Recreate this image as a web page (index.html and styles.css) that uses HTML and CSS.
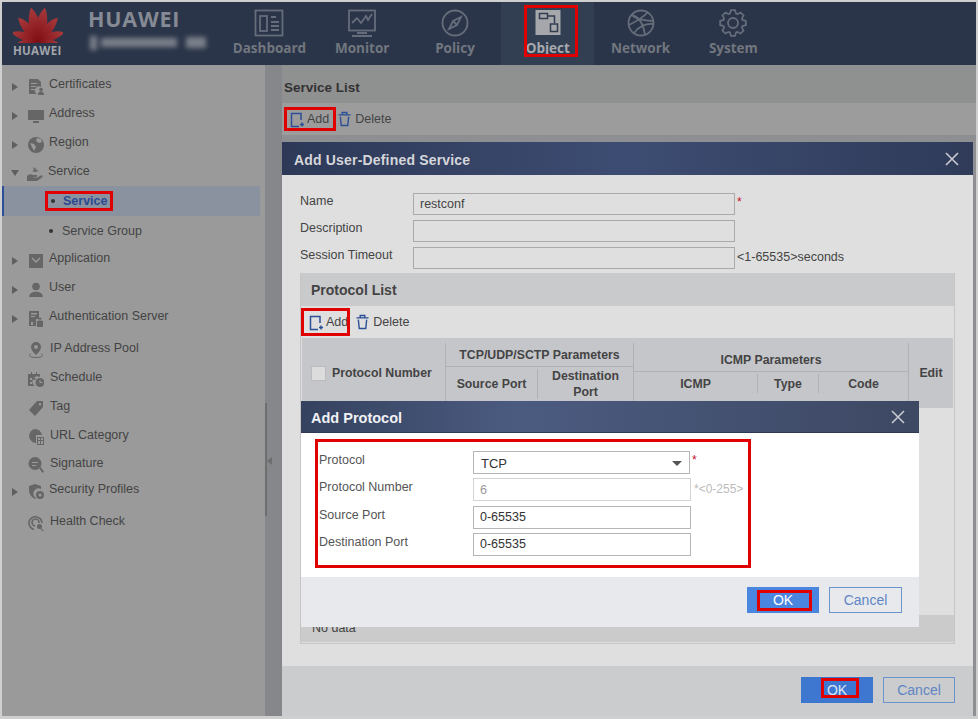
FILE: index.html
```html
<!DOCTYPE html>
<html lang="en">
<head>
<meta charset="utf-8">
<title>Service List</title>
<link rel="stylesheet" href="styles.css">
</head>
<body>
<div class="app">
  <header class="topbar">
    <div class="brand">
      <svg class="logo" viewBox="0 0 50 37" width="50" height="37">
        <defs>
          <linearGradient id="petal" x1="0" y1="0" x2="0" y2="1">
            <stop offset="0" stop-color="#a83a3c"/>
            <stop offset="1" stop-color="#7e0c12"/>
          </linearGradient>
        </defs>
        <g transform="translate(25 36)" fill="url(#petal)">
          <path transform="rotate(-10)" d="M0 0C-8-11-7-25-1-35 6-27 7-11 0 0Z"/>
          <path transform="rotate(10)" d="M0 0C-7-11-6-27 1-35 7-25 8-11 0 0Z"/>
          <path transform="rotate(-32)" d="M0 0C-7-9-8-22-4-31 3-25 5-10 0 0Z"/>
          <path transform="rotate(32)" d="M0 0C-5-10-3-25 4-31 8-22 7-9 0 0Z"/>
          <path transform="rotate(-56)" d="M0 0C-6-7-9-17-7-27 1-23 4-9 0 0Z"/>
          <path transform="rotate(56)" d="M0 0C-4-9-1-23 7-27 9-17 6-7 0 0Z"/>
          <path transform="rotate(-80)" d="M0 0C-5-5-7-13-6-21 0-18 3-7 0 0Z"/>
          <path transform="rotate(80)" d="M0 0C-3-7 0-18 6-21 7-13 5-5 0 0Z"/>
        </g>
      </svg>
      <span class="logo-word">HUAWEI</span>
    </div>
    <div class="product">
      <div class="product-name">HUAWEI</div>
      <div class="blurred"><span class="b1"></span><span class="b2"></span><span class="b3"></span></div>
    </div>
    <nav class="nav">
      <a class="nav-item">
        <svg class="nav-icon" viewBox="0 0 30 30"><rect x="1.5" y="2.5" width="27" height="25"/><rect x="6" y="8" width="7" height="15"/><path d="M17 9h5M17 14h8M17 18h8M17 22h8"/></svg>
        <span>Dashboard</span>
      </a>
      <a class="nav-item">
        <svg class="nav-icon" viewBox="0 0 30 30"><rect x="2" y="2.5" width="26" height="20"/><path d="M5 15l5-5 4 5 5-7 2 4 4-6M10 25h10M5 28h20"/></svg>
        <span>Monitor</span>
      </a>
      <a class="nav-item">
        <svg class="nav-icon" viewBox="0 0 30 30"><circle cx="15" cy="15" r="12.5"/><path d="M21 9l-8 4-4 8 8-4zM13 13l4 4"/></svg>
        <span>Policy</span>
      </a>
      <a class="nav-item nav-active">
        <svg class="nav-icon nav-icon-object" viewBox="0 0 30 30"><rect class="tile" x="2.500" y="2" width="25" height="25"/><rect x="6.500" y="5.500" width="8" height="5"/><path d="M14.500 8h7v7"/><rect x="17.500" y="16" width="7" height="7.500"/></svg>
        <span>Object</span>
      </a>
      <a class="nav-item">
        <svg class="nav-icon" viewBox="0 0 30 30"><circle cx="15" cy="15" r="12.5"/><path d="M5 7c6 1 12 6 14 20M3 17c6-3 14-7 19-13M8 25c4-6 12-10 19-9M6 7c4 4 8 5 21 6"/></svg>
        <span>Network</span>
      </a>
      <a class="nav-item">
        <svg class="nav-icon" viewBox="0 0 30 30"><g transform="translate(15 15)"><polygon points="9.51,-3.09 12.84,-2.03 12.84,2.03 9.51,3.09 8.91,4.54 10.52,7.64 7.64,10.52 4.54,8.91 3.09,9.51 2.03,12.84 -2.03,12.84 -3.09,9.51 -4.54,8.91 -7.64,10.52 -10.52,7.64 -8.91,4.54 -9.51,3.09 -12.84,2.03 -12.84,-2.03 -9.51,-3.09 -8.91,-4.54 -10.52,-7.64 -7.64,-10.52 -4.54,-8.91 -3.09,-9.51 -2.03,-12.84 2.03,-12.84 3.09,-9.51 4.54,-8.91 7.64,-10.52 10.52,-7.64 8.91,-4.54"/><circle r="5"/></g></svg>
        <span>System</span>
      </a>
    </nav>
  </header>

  <div class="workspace">
    <aside class="sidebar">
      <div class="tree-row"><i class="arrow"></i><svg class="tree-icon" viewBox="0 0 16 16"><path d="M1 0h9l3 3v5a4 4 0 0 0-4 7H1zM3 4v1h6V4zM3 7v1h5V7zM3 10v1h4v-1z"/><circle cx="13" cy="10.5" r="1.8"/><path d="M10 16c0-5 6-5 6 0z"/></svg><span>Certificates</span></div>
      <div class="tree-row"><i class="arrow"></i><svg class="tree-icon" viewBox="0 0 16 16"><path d="M0 2h16v10H0zM5 13h6v2H5z"/></svg><span>Address</span></div>
      <div class="tree-row"><i class="arrow"></i><svg class="tree-icon" viewBox="0 0 16 16"><circle cx="8" cy="8" r="8"/><path class="cut" d="M9 1l4 1 1 3-3 1-3-2zM2 6l4 1 2 3-2 4-2-4z"/></svg><span>Region</span></div>
      <div class="tree-row"><i class="arrow arrow-open"></i><svg class="tree-icon" viewBox="0 0 16 16"><path d="M0 10c2-2 4-2 6-1h3c2 0 1 2 0 2H6v.5h4l4-2c2-1 2 1 1 2l-5 3.500H3L0 15z"/><path d="M6 1l1 3-2 1 3 1 4-1-3-1 1-2-1 1z"/></svg><span>Service</span></div>
      <div class="tree-row sub selected"><i class="dot"></i><span>Service</span></div>
      <div class="tree-row sub h28"><i class="dot"></i><span>Service Group</span></div>
      <div class="tree-row"><i class="arrow"></i><svg class="tree-icon" viewBox="0 0 16 16"><path d="M1 1h14v14H1z"/><path class="cut-line" d="M4 5l4 4 4-4"/></svg><span>Application</span></div>
      <div class="tree-row"><i class="arrow"></i><svg class="tree-icon" viewBox="0 0 16 16"><circle cx="8" cy="4.500" r="3.800"/><path d="M1 15c0-7 14-7 14 0z"/></svg><span>User</span></div>
      <div class="tree-row"><i class="arrow"></i><svg class="tree-icon" viewBox="0 0 16 16"><path d="M1 0h10v8H8v7H1zM3 2v1.500h6V2zM3 5v1h4V5zM3 11v3h2v-3z"/><path d="M9 10h6v6H9zM10.500 10V8a1.500 1.500 0 0 1 3 0v2h-1V8h-1v2z"/></svg><span>Authentication Server</span></div>
      <div class="tree-row plain gap3"><i class="arrow-space"></i><svg class="tree-icon" viewBox="0 0 16 16"><path fill-rule="evenodd" d="M8 0a5 5 0 0 1 5 5c0 3-3 6-5 8-2-2-5-5-5-8a5 5 0 0 1 5-5zm0 3a2 2 0 1 0 0 4 2 2 0 0 0 0-4z"/><path class="cut-thin" d="M3 12c-3 1-2 3.500 5 3.500s8-2.500 5-3.500"/></svg><span>IP Address Pool</span></div>
      <div class="tree-row plain"><i class="arrow-space"></i><svg class="tree-icon" viewBox="0 0 16 16"><path d="M0 3h3V1h1v2h4V1h1v2h3v3a5 5 0 0 0-5 9H0zM2 7v2h2V7zM5.500 7v2h2V7zM2 11v2h2v-2z"/><path fill-rule="evenodd" d="M12 7a4.500 4.500 0 1 1 0 9 4.500 4.500 0 0 1 0-9zm-.5 2v3h3v-1h-2V9z"/></svg><span>Schedule</span></div>
      <div class="tree-row plain"><i class="arrow-space"></i><svg class="tree-icon" viewBox="0 0 16 16"><path fill-rule="evenodd" d="M9 1h6v6l-8 9-6-6zm3 2a1.200 1.200 0 1 0 0 2.400A1.200 1.200 0 0 0 12 3z"/></svg><span>Tag</span></div>
      <div class="tree-row plain"><i class="arrow-space"></i><svg class="tree-icon" viewBox="0 0 16 16"><path d="M7 0a7 7 0 0 1 7 6H8v7.900A7 7 0 0 1 7 0z"/><path d="M9 8h7v8H9zM10 9v2h2V9zM13 9v2h2V9zM10 12v3h2v-3zM13 12v3h2v-3z" fill-rule="evenodd"/></svg><span>URL Category</span></div>
      <div class="tree-row plain h27"><i class="arrow-space"></i><svg class="tree-icon" viewBox="0 0 16 16"><path fill-rule="evenodd" d="M7 0a6.500 6.500 0 1 1 0 13A6.500 6.500 0 0 1 7 0zM4 5v1h6V5zM4 8v1h4V8z"/><path d="M11 11l1.500-1 3.500 4.500-1.500 1.500z"/></svg><span>Signature</span></div>
      <div class="tree-row h25"><i class="arrow"></i><svg class="tree-icon" viewBox="0 0 16 16"><path d="M7 0l6 2v3a5 5 0 0 0-5 9l-1 1C3 13 1 10 1 6V2z"/><path fill-rule="evenodd" d="M12 7a4 4 0 1 1 0 8 4 4 0 0 1 0-8zm0 2.500a1.500 1.500 0 1 0 0 3 1.500 1.500 0 0 0 0-3z"/></svg><span>Security Profiles</span></div>
      <div class="tree-row plain gap5"><i class="arrow-space"></i><svg class="tree-icon" viewBox="0 0 16 16"><path class="cut-ring" d="M6 14.500A6.500 6.500 0 1 1 14 8M7 11a3.500 3.500 0 1 1 4-3"/><circle cx="11.500" cy="11.500" r="2.500"/><path d="M13 13l3 3-1 .5-3-3z"/></svg><span>Health Check</span></div>
    </aside>
    <div class="splitter"><i class="split-bar"></i><i class="split-arrow"></i></div>
    <main class="content">
      <h1 class="page-title">Service List</h1>
      <div class="toolbar">
        <a class="tool tool-add"><svg class="ico" viewBox="0 0 15 16"><path d="M11 8V1.500H1.500v13H9M10 12.500h4M12 10.500v4"/></svg>Add</a>
        <a class="tool"><svg class="ico ico-del" viewBox="0 0 14 16"><path d="M.5 3.500h13M4.500 3.500V1h5v2.500M2.500 5.500l1 9.500h7l1-9.500"/></svg>Delete</a>
      </div>
    </main>
  </div>
</div>

<section class="dialog">
  <div class="dialog-title"><span>Add User-Defined Service</span><svg class="close" viewBox="0 0 14 14"><path d="M1 1l12 12M13 1L1 13"/></svg></div>
  <div class="dialog-body">
    <div class="field"><label>Name</label><input class="input" type="text" value="restconf"><em class="req">*</em></div>
    <div class="field"><label>Description</label><input class="input" type="text"></div>
    <div class="field"><label>Session Timeout</label><input class="input" type="text"><span class="hint">&lt;1-65535&gt;seconds</span></div>
    <div class="panel">
      <h2 class="panel-title">Protocol List</h2>
      <div class="panel-tools">
        <a class="tool tool-add"><svg class="ico" viewBox="0 0 15 16"><path d="M11 8V1.500H1.500v13H9M10 12.500h4M12 10.500v4"/></svg>Add</a>
        <a class="tool"><svg class="ico ico-del" viewBox="0 0 14 16"><path d="M.5 3.500h13M4.500 3.500V1h5v2.500M2.500 5.500l1 9.500h7l1-9.500"/></svg>Delete</a>
      </div>
      <div class="thead">
        <div class="th th-proto"><i class="check"></i>Protocol Number</div>
        <div class="th-group th-tcp">
          <div class="group-title">TCP/UDP/SCTP Parameters</div>
          <div class="group-cols"><div class="th th-src">Source Port</div><div class="th th-dst">Destination Port</div></div>
        </div>
        <div class="th-group th-icmp">
          <div class="group-title">ICMP Parameters</div>
          <div class="group-cols"><div class="th th-i">ICMP</div><div class="th th-t">Type</div><div class="th th-c">Code</div></div>
        </div>
        <div class="th th-edit">Edit</div>
      </div>
      <div class="tbody"></div>
      <div class="tfoot">No data</div>
    </div>
  </div>
  <div class="dialog-foot">
    <button class="btn btn-ok">OK</button>
    <button class="btn btn-cancel">Cancel</button>
  </div>
</section>

<section class="modal">
  <div class="modal-title"><span>Add Protocol</span><svg class="close" viewBox="0 0 14 14"><path d="M1 1l12 12M13 1L1 13"/></svg></div>
  <div class="modal-body">
    <div class="mfield"><label>Protocol</label><div class="select">TCP<i class="caret"></i></div><em class="req">*</em></div>
    <div class="mfield"><label>Protocol Number</label><input class="minput minput-off" type="text" value="6" disabled><span class="off-hint">*&lt;0-255&gt;</span></div>
    <div class="mfield"><label>Source Port</label><input class="minput" type="text" value="0-65535"></div>
    <div class="mfield"><label>Destination Port</label><input class="minput" type="text" value="0-65535"></div>
  </div>
  <div class="modal-foot">
    <button class="btn btn-ok btn-bright">OK</button>
    <button class="btn btn-cancel">Cancel</button>
  </div>
</section>

<i class="mark mark-object"></i>
<i class="mark mark-service"></i>
<i class="mark mark-add"></i>
<i class="mark mark-add2"></i>
<i class="mark mark-form"></i>
<i class="mark mark-ok1"></i>
<i class="mark mark-ok2"></i>
</body>
</html>
```

FILE: styles.css
```css
* { box-sizing: border-box; }
html, body { margin: 0; height: 100%; overflow: hidden; }
body {
  background: #cfcfcf;
  padding: 2px 2px 3px;
  font-family: "Liberation Sans", Arial, sans-serif;
  font-size: 12.5px;
  color: #444;
}
.app { height: 714px; display: flex; flex-direction: column; }

/* top bar */
.topbar { height: 63px; background: #2b3549; display: flex; flex: none; color: #71767f; }
.brand { width: 85px; padding: 4px 0 0 11px; display: flex; flex-direction: column; }
.logo { display: block; }
.logo-word { font-size: 11.5px; font-weight: 700; color: #a2a5ac; margin-top: 1px; letter-spacing: .3px; font-family: "Open Sans", sans-serif; line-height: 14px; }
.product { width: 136px; padding-top: 4px; }
.product-name { font-family: "Open Sans", sans-serif; font-weight: 700; font-size: 21.5px; line-height: 26px; color: #858a94; padding-left: 1px; letter-spacing: .8px; }
.blurred { height: 15px; margin-top: 3px; display: flex; align-items: center; filter: blur(2.5px); }
.blurred span { display: block; background: #7b808a; }
.b1 { width: 7px; height: 14px; margin: 0 4px 0 3px; }
.b2 { width: 76px; height: 9px; margin-right: 9px; }
.b3 { width: 20px; height: 11px; }
.nav { display: flex; }
.nav-item {
  width: 92.800px; display: flex; flex-direction: column; align-items: center;
  font-family: "Open Sans", sans-serif; font-weight: 700; font-size: 13.5px; line-height: 20px; padding-top: 6px;
}
.nav-icon { width: 30px; height: 30px; fill: none; stroke: #656c7a; stroke-width: 1.800; }
.nav-active { background: #323e52; color: #a7a9ae; }
.nav-icon-object { stroke: #333d50; stroke-width: 1.500; }
.nav-icon-object .tile { fill: #a5a7ab; stroke: none; }

/* workspace */
.workspace { flex: 1; display: flex; min-height: 0; }
.sidebar { width: 263px; flex: none; background: #9a9a9a; padding-top: 5px; }
.tree-row { height: 29px; display: flex; align-items: center; padding: 0 0 1px 9px; line-height: 16px; }
.arrow { width: 0; height: 0; border-left: 6px solid #5f5f5f; border-top: 4.500px solid transparent; border-bottom: 4.500px solid transparent; margin: 5px 10px 0 1px; flex: none; }
.arrow-open { border-top: 6px solid #5f5f5f; border-left: 4.500px solid transparent; border-right: 4.500px solid transparent; border-bottom: 0; margin: 4px 8px 0 0; }
.arrow-space { width: 17px; flex: none; }
.tree-icon { width: 16px; height: 16px; fill: #666; margin: 5px 5px 0 0; flex: none; }
.plain .tree-icon { margin: 3px 6px 0 0; }
.cut { fill: #9a9a9a; }
.cut-line { fill: none; stroke: #9a9a9a; stroke-width: 1.500; }
.cut-thin { fill: none; stroke: #666; stroke-width: 1; }
.cut-ring { fill: none; stroke: #666; stroke-width: 1.600; }
.sub { padding: 1px 0 0 47px; }
.selected { width: 258px; height: 30px; padding: 0 0 0 47px; background: #8a929f; border-left: 2px solid #2c4f95; color: #2a4a94; font-weight: 700; }
.dot { width: 4px; height: 4px; border-radius: 50%; background: #333; margin-right: 9px; flex: none; }
.selected .dot { margin-right: 8px; }
.h28 { height: 28px; }
.h27 { height: 27px; }
.h25 { height: 25px; }
.gap3 { margin-top: 3px; }
.gap5 { margin-top: 5px; }

.splitter { width: 17px; flex: none; background: #86878a; position: relative; }
.split-bar { position: absolute; left: 0; top: 338px; width: 2px; height: 113px; background: #6d6e70; }
.split-arrow { position: absolute; left: 2px; top: 392px; width: 0; height: 0; border-right: 5px solid #6d6e70; border-top: 4px solid transparent; border-bottom: 4px solid transparent; }
.content { flex: 1; background: #8e8f92; }
.page-title { margin: 0; height: 38px; background: #8f9090; font-size: 13.5px; line-height: 45px; padding-left: 2px; color: #333; }
.toolbar { height: 32px; background: #9c9c9c; display: flex; align-items: center; padding-left: 8px; gap: 9px; }
.tool { display: flex; align-items: center; color: #444; line-height: 16px; }
.ico { width: 15px; height: 16px; fill: none; stroke: #2c4f95; stroke-width: 1.500; margin-right: 2px; }
.ico-del { width: 13px; margin-right: 4px; }
.tool-add .ico { margin-top: 2px; }

/* dialog */
.dialog { position: absolute; left: 282px; top: 142px; width: 691px; height: 574px; background: #dfdfdf; display: flex; flex-direction: column; }
.dialog-title { height: 33px; flex: none; display: flex; align-items: center; justify-content: space-between; padding: 2px 14px 0 12px; background: linear-gradient(90deg, #2d3957, #3d4c72 50%, #2f3b59); color: #d5d6da; font-weight: 700; font-size: 14px; letter-spacing: .18px; }
.close { width: 14px; height: 14px; fill: none; stroke: #c8cad1; stroke-width: 1.600; margin-top: -2px; }
.dialog-body { flex: 1; padding: 18px 18px 0; min-height: 0; }
.field { height: 22px; display: flex; margin-bottom: 5px; }
.field label { width: 113px; flex: none; line-height: 16px; }
.input { width: 322px; height: 22px; border: 1px solid #aaa; background: #dfdfdf; padding: 0 6px; font: inherit; color: #444; outline: 0; }
.req { color: #c8102e; font-style: normal; margin-left: 2px; line-height: 18px; font-size: 12px; }
.hint { margin-left: 2px; line-height: 21px; color: #444; }
.panel { width: 655px; height: 371px; margin-top: -1px; background: #dfdfdf; border: 1px solid #c5c5c5; border-top: 0; display: flex; flex-direction: column; }
.panel-title { margin: 0; height: 33px; background: #c9cacb; font-size: 14px; line-height: 35px; padding-left: 10px; color: #444; flex: none; }
.panel-tools { height: 32px; display: flex; align-items: center; padding-left: 8px; gap: 8px; flex: none; }
.thead { height: 70px; margin: 0 1px; background: #c5c6ca; display: flex; flex: none; font-weight: 700; color: #444; font-size: 12.3px; text-align: center; line-height: 16px; }
.th { display: flex; align-items: center; justify-content: center; }
.th-proto { width: 144px; justify-content: flex-start; padding: 0 0 5px 9px; border-right: 1px solid #b0b1b5; margin-top: 5px; }
.check { width: 15px; height: 15px; background: #dcdcdc; border: 1px solid #bcbcbc; margin-right: 6px; flex: none; }
.th-group { display: flex; flex-direction: column; border-right: 1px solid #b0b1b5; margin-top: 5px; }
.th-tcp { width: 188px; margin-bottom: 7px; }
.th-icmp { width: 275px; margin-bottom: 7px; }
.group-title { flex: none; display: flex; align-items: center; justify-content: center; border-bottom: 1px solid #b0b1b5; }
.th-tcp .group-title { height: 24px; }
.th-icmp .group-title { height: 29px; padding-top: 6px; }
.group-cols { flex: 1; display: flex; align-items: stretch; }
.th-src { width: 92px; border-right: 1px solid #b0b1b5; margin: 2px 0; }
.th-dst { flex: 1; padding: 0 8px; }
.th-i { width: 124px; border-right: 1px solid #b0b1b5; margin: 2px 0 8px; }
.th-t { width: 61px; border-right: 1px solid #b0b1b5; margin: 2px 0 8px; }
.th-c { flex: 1; margin: 2px 0 8px; }
.th-edit { flex: 1; margin-bottom: 1px; }
.tbody { height: 207px; flex: none; }
.tfoot { height: 27px; flex: none; background: #cbcbcb; line-height: 27px; padding-left: 11px; }
.dialog-foot { height: 50px; flex: none; background: #cbcccd; display: flex; justify-content: flex-end; gap: 10px; padding: 11px 18px 0 0; }
.btn { width: 72px; height: 26px; font: inherit; font-size: 14px; padding: 0; }
.btn-ok { background: #3e77d0; border: 0; color: #dfe6f3; }
.btn-bright { background: #4a86e0; color: #fff; }
.btn-cancel { background: transparent; border: 1px solid #6b94cf; color: #5f85c4; }

/* modal */
.modal { position: absolute; left: 301px; top: 401px; width: 618px; height: 226px; display: flex; flex-direction: column; background: #fff; }
.modal-title { height: 32px; flex: none; display: flex; align-items: center; justify-content: space-between; padding: 2px 14px 0 10px; background: linear-gradient(90deg, #35425f, #4b5b80 35%, #3d4863); color: #f0f1f4; font-weight: 700; font-size: 14.5px; border-bottom: 1px solid #2f3a52; }
.modal-body { flex: 1; padding: 18px 0 0 18px; }
.mfield { display: flex; height: 23px; margin-bottom: 4.33px; }
.mfield label { width: 154px; flex: none; line-height: 16px; color: #555; margin-top: 1px; }
.select { width: 217px; height: 23px; border: 1px solid #b5b5b5; padding-left: 7px; line-height: 23px; position: relative; color: #333; font-size: 13px; }
.caret { position: absolute; right: 7px; top: 9px; width: 0; height: 0; border-top: 5px solid #555; border-left: 5px solid transparent; border-right: 5px solid transparent; }
.minput { width: 218px; height: 23px; border: 1px solid #b5b5b5; padding: 0 6px; font: inherit; color: #333; background: #fff; outline: 0; }
.minput-off { border-color: #d4d4d4; color: #999; }
.off-hint { color: #bbb; font-size: 12px; margin-left: 3px; line-height: 23px; }
.modal-foot { height: 50px; flex: none; background: #e8e9ed; display: flex; justify-content: flex-end; gap: 10px; padding: 10px 17px 0 0; }
.modal-foot .btn-cancel { width: 73px; }

/* red annotation frames */
.mark { position: absolute; border: 3px solid #e00000; }
.mark-object { left: 524px; top: 5px; width: 54px; height: 52px; }
.mark-service { left: 45px; top: 191px; width: 68px; height: 20px; }
.mark-add { left: 284px; top: 107px; width: 52px; height: 24px; }
.mark-add2 { left: 301px; top: 308px; width: 49px; height: 28px; }
.mark-form { left: 315px; top: 439px; width: 436px; height: 129px; }
.mark-ok1 { left: 757px; top: 590px; width: 55px; height: 21px; }
.mark-ok2 { left: 821px; top: 678px; width: 38px; height: 20px; }
```
